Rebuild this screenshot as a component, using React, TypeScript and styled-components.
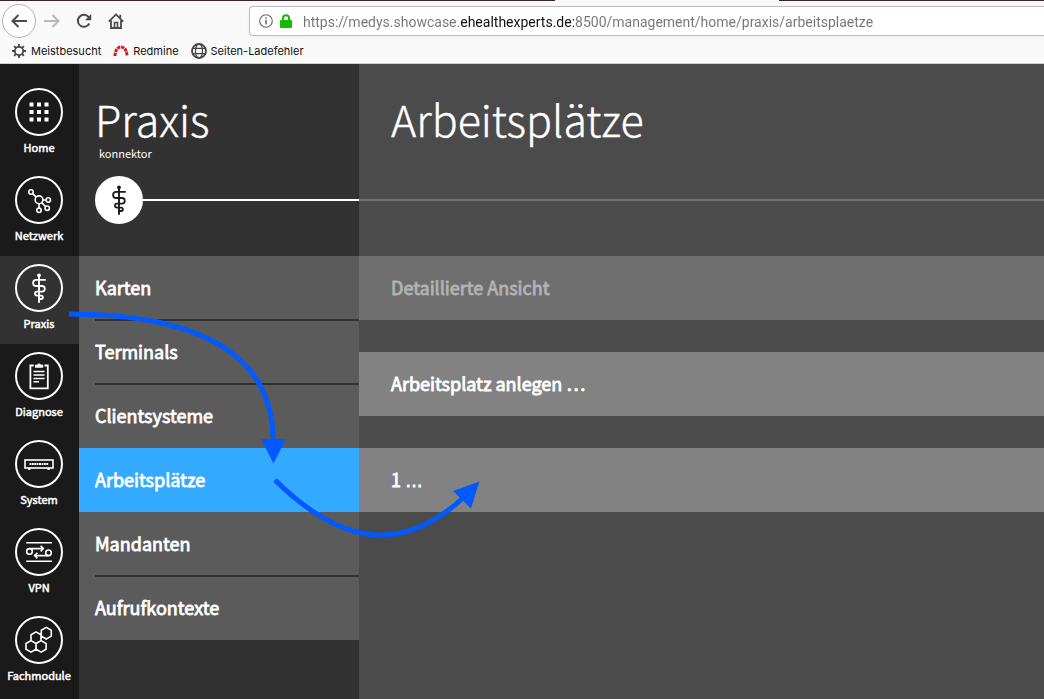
import React, { useState } from "react";
import styled, { createGlobalStyle } from "styled-components";

const Global = createGlobalStyle`
  *, *::before, *::after { box-sizing: border-box; }
  body { margin: 0; background: #4b4b4b; }
  button, input { font: inherit; }
  svg { display: block; flex: none; }
`;

const uiFont = `Inter, "Liberation Sans", sans-serif`;
const appFont = `"Noto Sans CJK SC", "Noto Sans", sans-serif`;

const Page = styled.div`
  display: flex;
  flex-direction: column;
  min-height: 100vh;
`;

/* Browser chrome */

const Chrome = styled.header`
  background: #f9f9f9;
  border-bottom: 1px solid #d0d0d0;
  font-family: ${uiFont};
  height: 64px;
  overflow: hidden;
`;

const TabStrip = styled.div`
  display: flex;
  height: 1px;
  background: #35262a;
`;

const ActiveTab = styled.div`
  width: 224px;
  margin-left: 555px;
  background: #f9f9f9;
`;

const Toolbar = styled.div`
  display: flex;
  align-items: center;
  height: 40px;
  padding-left: 2px;
`;

const ToolButton = styled.button<{ $round?: boolean }>`
  display: flex;
  align-items: center;
  justify-content: center;
  width: ${(p) => (p.$round ? 34 : 32)}px;
  height: ${(p) => (p.$round ? 34 : 32)}px;
  padding: 0;
  border: ${(p) => (p.$round ? "1px solid #b5b5b5" : "0")};
  border-radius: ${(p) => (p.$round ? "50%" : "2px")};
  background: ${(p) => (p.$round ? "#fdfdfd" : "transparent")};
  color: #4a4a4a;
  &:disabled { color: #b9b9b9; }
`;

const AddressBar = styled.label`
  display: flex;
  flex: 1;
  align-items: center;
  gap: 6px;
  height: 30px;
  margin-left: 117px;
  padding-left: 9px;
  border: 1px solid #bdbdbd;
  border-right: 0;
  border-radius: 4px 0 0 4px;
  background: #fff;
  box-shadow: 0 1px 3px rgba(0, 0, 0, 0.06);
`;

const UrlInput = styled.input`
  flex: 1;
  min-width: 0;
  height: 24px;
  margin-left: 4px;
  padding: 2px 0 0;
  border: 0;
  outline: 0;
  font-family: Roboto, "Liberation Sans", sans-serif;
  font-size: 14px;
  color: transparent;
  background: linear-gradient(90deg, #757575 157px, #101010 157px, #101010 271px, #757575 271px);
  background-clip: text;
  -webkit-background-clip: text;
`;

const Bookmarks = styled.nav`
  display: flex;
  align-items: center;
  gap: 12px;
  height: 20px;
  padding-left: 11px;
`;

const Bookmark = styled.a`
  display: flex;
  align-items: center;
  gap: 4px;
  font-size: 11px;
  line-height: 16px;
  color: #111;
  text-decoration: none;
  white-space: nowrap;
`;

/* Application */

const Workspace = styled.div`
  position: relative;
  display: flex;
  flex: 1;
  font-family: ${appFont};
  color: #fff;
`;

const Rail = styled.nav`
  display: flex;
  flex-direction: column;
  flex: none;
  width: 79px;
  padding-top: 16px;
  background: #1a1a1a;
`;

const RailItem = styled.a<{ $active?: boolean }>`
  display: flex;
  flex-direction: column;
  align-items: center;
  gap: 3px;
  height: 88px;
  padding: 8px 1px 0 0;
  background: ${(p) => (p.$active ? "#323232" : "transparent")};
  color: #fff;
  font-size: 11px;
  font-weight: 400;
  -webkit-text-stroke: 0.5px currentColor;
  line-height: 16px;
  text-decoration: none;
`;

const Disc = styled.span<{ $filled?: boolean }>`
  display: flex;
  align-items: center;
  justify-content: center;
  flex: none;
  width: 48px;
  height: 48px;
  border: 2px solid #fff;
  border-radius: 50%;
  background: ${(p) => (p.$filled ? "#fff" : "transparent")};
  color: ${(p) => (p.$filled ? "#1a1a1a" : "#fff")};
`;

const Panel = styled.aside`
  flex: none;
  width: 280px;
  background: #323232;
`;

const Heading = styled.header<{ $indent: number }>`
  display: flex;
  flex-direction: column;
  height: 192px;
  padding-top: 27px;
  padding-left: ${(p) => p.$indent}px;
`;

const Title = styled.h1`
  margin: 0;
  font-size: 43px;
  font-weight: 300;
  -webkit-text-stroke: 0.4px currentColor;
  line-height: 54px;
`;

const Subtitle = styled.span`
  height: 16px;
  padding-left: 4px;
  font-size: 11px;
  line-height: 16px;
`;

const Track = styled.div`
  display: flex;
  align-items: center;
  height: 48px;
  margin-top: 15px;
`;

const Rule = styled.div<{ $muted?: boolean }>`
  flex: 1;
  height: 2px;
  background: ${(p) => (p.$muted ? "#707070" : "#fff")};
`;

const MainRule = styled(Rule)`
  flex: none;
  margin-top: 54px;
  margin-left: -32px;
`;

const Menu = styled.nav`
  display: flex;
  flex-direction: column;
`;

const MenuItem = styled.a<{ $active?: boolean }>`
  position: relative;
  height: 64px;
  padding-left: 16px;
  background: ${(p) => (p.$active ? "#33a9ff" : "#5b5b5b")};
  color: #fff;
  font-size: 18px;
  font-weight: 400;
  -webkit-text-stroke: 0.8px currentColor;
  line-height: 62px;
  text-decoration: none;
  & + &::before {
    content: "";
    position: absolute;
    top: -1px;
    right: 0;
    left: 16px;
    height: 2px;
    background: #323232;
  }
`;

const Main = styled.main`
  flex: 1;
  min-width: 0;
  background: #4b4b4b;
`;

const Rows = styled.div`
  display: flex;
  flex-direction: column;
  gap: 32px;
`;

const Row = styled.button`
  height: 64px;
  padding: 0 32px 2px;
  border: 0;
  background: #828282;
  color: #fff;
  font-size: 18px;
  font-weight: 400;
  -webkit-text-stroke: 0.8px currentColor;
  line-height: 62px;
  text-align: left;
  &:disabled {
    background: #6f6f6f;
    color: #b3b3b3;
  }
`;

/* The CJK face centres a lone ellipsis; this one keeps it on the baseline */
const Ellipsis = styled.span`
  font-family: "Liberation Sans", sans-serif;
`;

const Annotations = styled.svg`
  position: absolute;
  top: 0;
  left: 0;
  pointer-events: none;
`;

/* Icons: all rail glyphs are drawn on the 48px disc grid */

const Glyph = ({ children }: { children: React.ReactNode }) => (
  <svg width="48" height="48" viewBox="0 0 48 48" fill="none" stroke="currentColor" strokeWidth="1.6" aria-hidden="true">
    {children}
  </svg>
);

const GridIcon = () => (
  <Glyph>
    {[16.5, 24, 31.5].map((y) =>
      [16.5, 24, 31.5].map((x) => (
        <rect key={`${x}-${y}`} x={x - 2} y={y - 2} width="4" height="4" fill="currentColor" stroke="none" />
      ))
    )}
  </Glyph>
);

const NetworkIcon = () => (
  <Glyph>
    <circle cx="24" cy="23.8" r="3.9" />
    <circle cx="16" cy="16" r="2.2" />
    <circle cx="33.3" cy="24" r="2.2" />
    <circle cx="32.2" cy="32.2" r="2.2" />
    <circle cx="24" cy="34.3" r="2.2" />
    <path d="M17.6 17.6l3.6 3.5M28 24h3M26.8 26.6l3.8 4M24 27.8v4.3" />
  </Glyph>
);

const StaffIcon = () => (
  <Glyph>
    <circle cx="24" cy="11.3" r="1.9" fill="currentColor" stroke="none" />
    <path d="M24 11v27.7" strokeWidth="1.9" />
    <path d="M30.8 15.8H21.2a3.1 3.1 0 0 0 0 6.2H27a2.8 2.8 0 0 1 0 5.6h-5a2 2 0 0 0 0 4h4.2a1.7 1.7 0 0 1 0 3.4H23" strokeWidth="1.8" />
  </Glyph>
);

const ClipboardIcon = () => (
  <Glyph>
    <path d="M18.8 13.5h-3.4v22.8h17.4V13.5h-3.4" strokeWidth="1.8" />
    <path d="M20 15.8v-3h2.3a1.9 1.9 0 0 1 3.6 0h2.3v3z" fill="currentColor" stroke="none" />
    <path d="M18.5 19.6h11M18.5 23h11M18.5 26.4h11M18.5 29.8h5.5" strokeWidth="1.5" />
  </Glyph>
);

const RouterIcon = () => (
  <Glyph>
    <rect x="10" y="20" width="28" height="8" />
    <path d="M14.5 24h19" strokeWidth="2.2" strokeDasharray="1.9 .5" />
    <path d="M13.2 29h2.2M32.4 29h2.4" strokeWidth="2.2" />
  </Glyph>
);

const VpnIcon = () => (
  <Glyph>
    <path d="M11.2 14.7h25.8M11.2 33.3h25.8" />
    <circle cx="14.5" cy="23.4" r="2.8" />
    <circle cx="33.5" cy="24.8" r="2.8" />
    <path d="M14.5 20.6h13.8M25.6 17.8l2.8 2.8-2.8 2.8M33.5 27.6H19.6M22.4 24.8l-2.8 2.8 2.8 2.8" />
  </Glyph>
);

const hexagon = (cx: number, cy: number) =>
  `M${cx} ${cy - 5.8}l5 2.9v5.8l-5 2.9l-5 -2.9v-5.8z`;

const ModulesIcon = () => (
  <Glyph>
    <path d={[hexagon(31.3, 17.2), hexagon(21, 21.7), hexagon(16, 30.4), hexagon(26.1, 30.4)].join("")} />
  </Glyph>
);

const Small = ({ size = 16, children }: { size?: number; children: React.ReactNode }) => (
  <svg width={size} height={size} viewBox="0 0 16 16" fill="none" stroke="currentColor" strokeWidth="2" aria-hidden="true">
    {children}
  </svg>
);

const railItems = [
  { label: "Home", Icon: GridIcon },
  { label: "Netzwerk", Icon: NetworkIcon },
  { label: "Praxis", Icon: StaffIcon },
  { label: "Diagnose", Icon: ClipboardIcon },
  { label: "System", Icon: RouterIcon },
  { label: "VPN", Icon: VpnIcon },
  { label: "Fachmodule", Icon: ModulesIcon },
];

const menuItems = ["Karten", "Terminals", "Clientsysteme", "Arbeitsplätze", "Mandanten", "Aufrufkontexte"];

export default function App() {
  const [url, setUrl] = useState(
    "https://medys.showcase.ehealthexperts.de:8500/management/home/praxis/arbeitsplaetze"
  );

  return (
    <Page lang="de">
      <Global />
      <Chrome>
        <TabStrip>
          <ActiveTab />
        </TabStrip>
        <Toolbar>
          <ToolButton $round aria-label="Zurück">
            <Small>
              <path d="M16 8H1.5M7.5 2L1.5 8l6 6" />
            </Small>
          </ToolButton>
          <ToolButton disabled aria-label="Vor">
            <Small>
              <path d="M0 8h14.5M8.5 2l6 6-6 6" />
            </Small>
          </ToolButton>
          <ToolButton aria-label="Neu laden">
            <Small>
              <path d="M13.3 10.5A6 6 0 1 1 12.6 4.1" />
              <path d="M15.2 1v6.2H9z" fill="currentColor" stroke="none" />
            </Small>
          </ToolButton>
          <ToolButton aria-label="Startseite">
            <Small>
              <path d="M.8 8.6L8 1.4l7.2 7.2M3 7.5V15h10V7.5M12.3 1.8v3" strokeWidth="1.8" />
              <path d="M6.5 15V9.5h3V15" strokeWidth="1.6" />
            </Small>
          </ToolButton>
          <AddressBar>
            <svg width="14" height="14" viewBox="0 0 14 14" fill="none" stroke="#666" aria-hidden="true">
              <circle cx="7" cy="7" r="6.3" strokeWidth="1.1" />
              <path d="M7 6v4.5M7 3.2v1.5" strokeWidth="1.5" />
            </svg>
            <svg width="14" height="14" viewBox="0 0 14 14" aria-hidden="true">
              <path d="M4 7V4.2a3 3 0 0 1 6 0V7" fill="none" stroke="#12bc00" strokeWidth="2" />
              <rect x="1" y="6" width="12" height="8" rx="1" fill="#12bc00" />
            </svg>
            <UrlInput
              type="text"
              aria-label="Adresse"
              spellCheck={false}
              value={url}
              onChange={(e) => setUrl(e.target.value)}
            />
          </AddressBar>
        </Toolbar>
        <Bookmarks>
          <Bookmark href="#">
            <svg width="16" height="16" viewBox="0 0 16 16" fill="none" stroke="#444" aria-hidden="true">
              <circle cx="8" cy="8" r="4.2" strokeWidth="1.8" />
              <path d="M8 1v3M8 12v3M1 8h3M12 8h3M3.1 3.1l2 2M10.9 10.9l2 2M3.1 12.9l2-2M10.9 5.1l2-2" strokeWidth="1.8" />
            </svg>
            Meistbesucht
          </Bookmark>
          <Bookmark href="#">
            <svg width="16" height="16" viewBox="0 0 16 16" fill="none" stroke="#d8161d" aria-hidden="true">
              <path d="M2 13C2.2 7.500 4.500 4 8 4s5.800 3.500 6 9" strokeWidth="3" strokeDasharray="3.200 .8" />
            </svg>
            Redmine
          </Bookmark>
          <Bookmark href="#">
            <svg width="16" height="16" viewBox="0 0 16 16" fill="none" stroke="#444" aria-hidden="true">
              <circle cx="8" cy="8" r="7" strokeWidth="1.8" />
              <ellipse cx="8" cy="8" rx="3.5" ry="7" strokeWidth="1.2" />
              <path d="M2 5.300h12M2 10.700h12" strokeWidth="1.2" />
            </svg>
            Seiten-Ladefehler
          </Bookmark>
        </Bookmarks>
      </Chrome>

      <Workspace>
        <Rail aria-label="Hauptnavigation">
          {railItems.map(({ label, Icon }) => (
            <RailItem key={label} href="#" $active={label === "Praxis"}>
              <Disc>
                <Icon />
              </Disc>
              {label}
            </RailItem>
          ))}
        </Rail>

        <Panel>
          <Heading $indent={16}>
            <Title>Praxis</Title>
            <Subtitle>konnektor</Subtitle>
            <Track>
              <Disc $filled>
                <StaffIcon />
              </Disc>
              <Rule />
            </Track>
          </Heading>
          <Menu aria-label="Praxis">
            {menuItems.map((label) => (
              <MenuItem key={label} href="#" $active={label === "Arbeitsplätze"}>
                {label}
              </MenuItem>
            ))}
          </Menu>
        </Panel>

        <Main>
          <Heading $indent={32}>
            <Title>Arbeitsplätze</Title>
            <MainRule $muted />
          </Heading>
          <Rows>
            <Row disabled>Detaillierte Ansicht</Row>
            <Row>Arbeitsplatz anlegen …</Row>
            <Row>
              1 <Ellipsis>…</Ellipsis>
            </Row>
          </Rows>
        </Main>

        <Annotations width="500" height="490" viewBox="0 64 500 490" aria-hidden="true">
          <g fill="none" stroke="#005aff" strokeWidth="5">
            <path d="M69 314C184 314 273 346 273 440" />
            <path d="M275 480C345 549 405 551 463 498" />
          </g>
          <path d="M261 439h25l-12.500 24.500zM453 491l26.500-9.500-8.500 27z" fill="#005aff" />
        </Annotations>
      </Workspace>
    </Page>
  );
}
